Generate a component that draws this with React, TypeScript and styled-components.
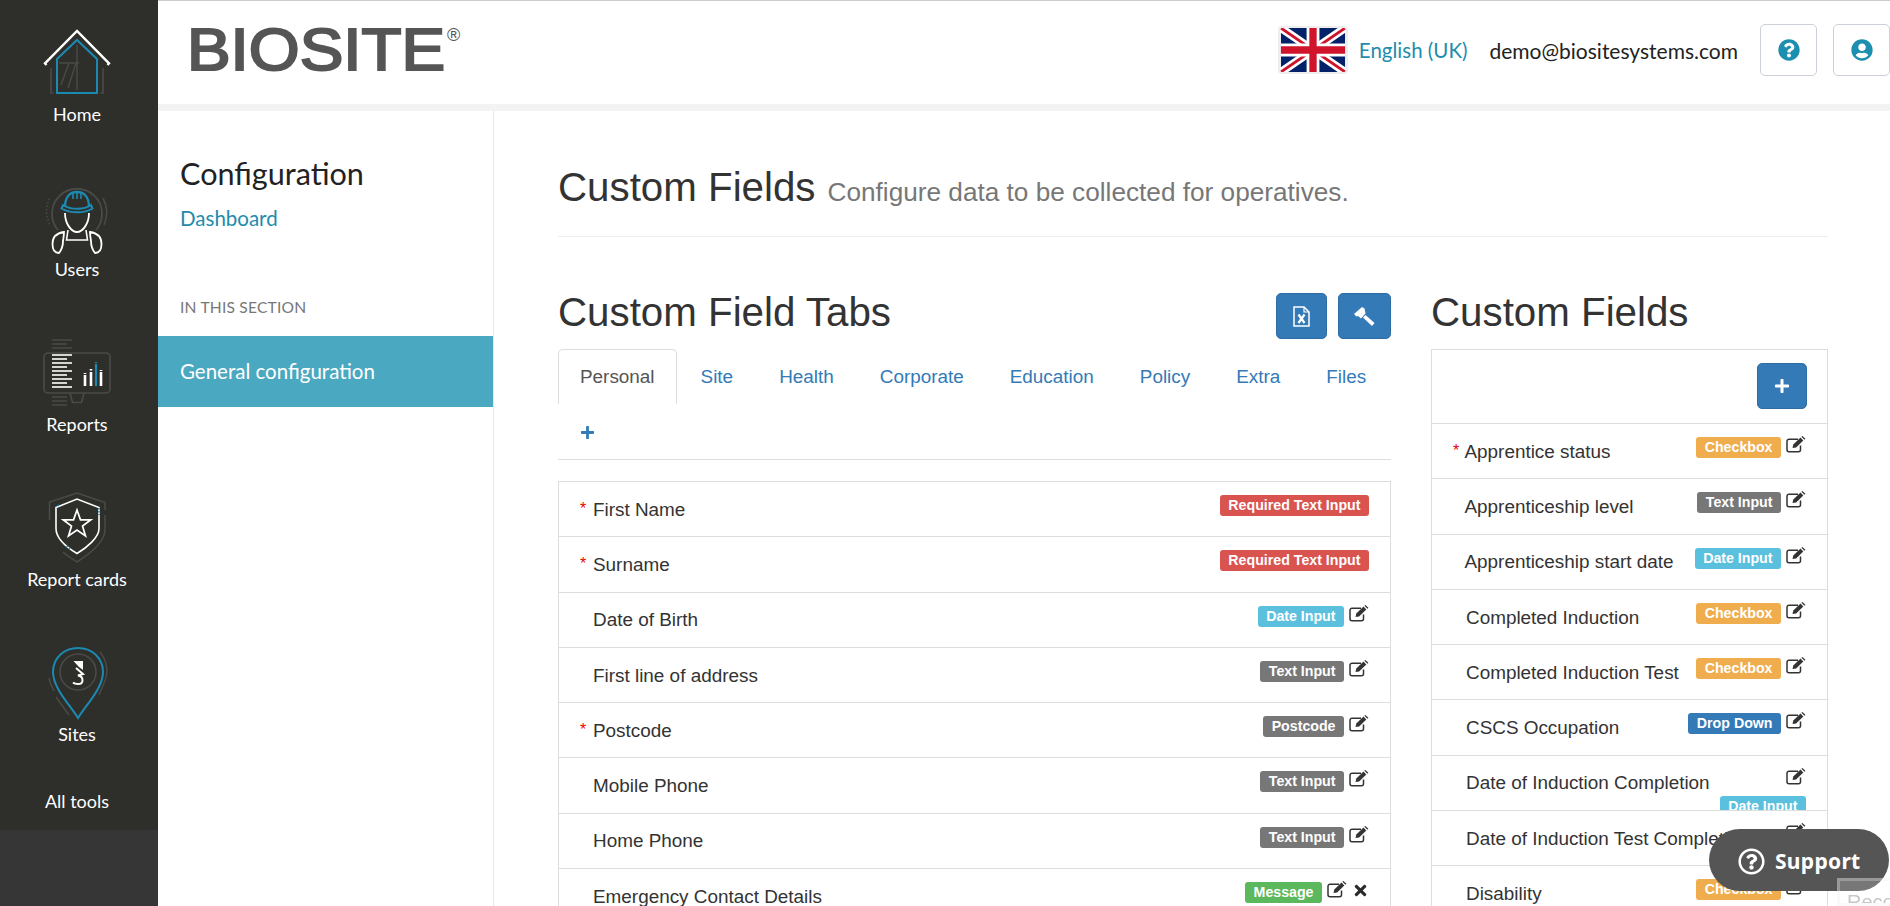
import React from 'react'
import styled, { createGlobalStyle } from 'styled-components'
import { FaQuestionCircle, FaUserCircle, FaPlus, FaTimes, FaRegQuestionCircle } from 'react-icons/fa'

const sans = `"Liberation Sans", Arial, sans-serif`
const ui = `Lato, "Noto Sans", sans-serif`

const Global = createGlobalStyle`
  html, body { margin: 0; padding: 0; height: 906px; overflow: hidden; background: #fff; }
  * { box-sizing: border-box; }
`

const Page = styled.div`
  display: flex;
  width: 1890px;
  height: 906px;
  overflow: hidden;
  font-family: ${sans};
  color: #333;
`

const Sidebar = styled.nav`
  width: 158px;
  flex: none;
  display: flex;
  flex-direction: column;
  background: #363636;
  font-family: ${ui};
`
const SideTop = styled.div`
  height: 830px;
  padding-right: 4px;
  background: #2e2e2b;
  display: flex;
  flex-direction: column;
`
const NavItem = styled.a`
  height: 155px;
  flex: none;
  padding-top: 18px;
  display: flex;
  flex-direction: column;
  align-items: center;
  color: #fff;
  font-size: 18px;
  line-height: 24px;
  svg { display: block; }
`
const AllTools = styled.a`
  margin-top: 14px;
  text-align: center;
  color: #fff;
  font-size: 18px;
  line-height: 24px;
`

const Body = styled.div`
  flex: 1;
  min-width: 0;
  display: flex;
  flex-direction: column;
`
const TopBar = styled.header`
  height: 111px;
  flex: none;
  border-top: 1px solid #ccc;
  border-bottom: 7px solid #f3f3f3;
  display: flex;
  align-items: flex-start;
  justify-content: space-between;
  font-family: ${ui};
`
const Logo = styled.svg`
  margin: 9px 0 0 28px;
  display: block;
`
const TopRight = styled.div`
  display: flex;
  align-items: center;
  height: 52px;
  margin-top: 23px;
`
const Flag = styled.svg`
  display: block;
  border-radius: 4px;
  border: 2px solid #eee;
  margin-right: 11px;
`
const Lang = styled.a`
  color: #1e8cab;
  font-size: 20.5px;
  margin-right: 22px;
`
const Email = styled.span`
  color: #222;
  font-size: 21px;
  margin-right: 22px;
`
const IconBox = styled.button`
  width: 57px;
  height: 52px;
  margin-left: ${p => p.$gap || 0}px;
  border: 1px solid #ccd0d8;
  border-radius: 5px;
  background: #fff;
  color: #1c8fb0;
  display: flex;
  align-items: center;
  justify-content: center;
  padding: 0;
`

const Content = styled.div`
  flex: 1;
  min-height: 0;
  display: flex;
`
const SubNav = styled.aside`
  width: 336px;
  flex: none;
  border-right: 1px solid #e8e8e8;
  font-family: ${ui};
`
const SubTitle = styled.div`
  padding: 44px 0 0 22px;
  font-size: 30.6px;
  line-height: 38px;
  color: #222;
`
const SubLink = styled.a`
  display: block;
  padding: 12px 0 0 22px;
  font-size: 20.5px;
  line-height: 26px;
  color: #1e8cab;
`
const SectionLabel = styled.div`
  padding: 66px 0 0 22px;
  font-size: 15.6px;
  line-height: 20px;
  letter-spacing: 0.2px;
  color: #777;
`
const ActiveNav = styled.a`
  display: block;
  margin-top: 19px;
  height: 71px;
  line-height: 71px;
  padding-left: 22px;
  background: #4ba8c1;
  color: #fff;
  font-size: 20.5px;
`

const Main = styled.main`
  flex: 1;
  min-width: 0;
  padding: 54px 62px 0 64px;
`
const PageHead = styled.div`
  display: flex;
  align-items: baseline;
  gap: 12px;
  height: 72px;
  border-bottom: 1px solid #eee;
`
const H1 = styled.h1`
  margin: 0;
  font-size: 40.3px;
  line-height: 46px;
  font-weight: 400;
  color: #333;
`
const Small = styled.small`
  font-size: 26.2px;
  color: #777;
`
const Columns = styled.div`
  display: grid;
  grid-template-columns: 833px 397px;
  column-gap: 40px;
  margin-top: 53px;
`
const ColHead = styled.div`
  display: flex;
  justify-content: space-between;
  align-items: flex-start;
  height: 59px;
`
const H2 = styled.h2`
  margin: 0;
  font-size: 40.3px;
  line-height: 46px;
  font-weight: 400;
  color: #333;
`
const BtnGroup = styled.div`
  display: flex;
  gap: 11px;
  margin-top: 3px;
`
const BlueBtn = styled.button`
  width: ${p => p.$w || 51}px;
  height: 46px;
  background: #337ab7;
  border: 1px solid #2e6da4;
  border-radius: 5px;
  color: #fff;
  padding: 0;
  display: flex;
  align-items: center;
  justify-content: center;
`

const Tabs = styled.div`
  display: flex;
  flex-wrap: wrap;
  border-bottom: 1px solid #ddd;
  margin-bottom: 21px;
`
const Tab = styled.a`
  height: 55px;
  padding: 0 21px;
  margin-right: 2px;
  display: flex;
  align-items: center;
  font-size: 18.9px;
  border: 1px solid ${p => (p.$active ? '#ddd' : 'transparent')};
  border-bottom: 0;
  border-radius: 5px 5px 0 0;
  color: ${p => (p.$active ? '#555' : '#337ab7')};
`

const List = styled.div`
  display: flex;
  flex-direction: column;
`
const AddRow = styled.div`
  height: 75px;
  border: 1px solid #ddd;
  padding: 13px 20px 0 0;
  display: flex;
  justify-content: flex-end;
`
const Row = styled.div`
  height: 56.3px;
  flex: none;
  margin-top: -1px;
  padding: 0 21px;
  border: 1px solid #ddd;
  background: #fff;
  display: flex;
  align-items: center;
  overflow: hidden;
  position: relative;
  &:first-child { margin-top: 0; }
`
const Star = styled.span`
  width: 13px;
  flex: none;
  color: #e00;
  font-size: 16px;
  line-height: 1;
`
const FieldName = styled.span`
  flex: 1;
  min-width: 0;
  margin-left: ${p => p.$shift || 0}px;
  padding-top: 1px;
  font-size: 18.9px;
  white-space: nowrap;
`
const Tools = styled.div`
  align-self: flex-start;
  flex: none;
  display: flex;
  flex-direction: ${p => (p.$stacked ? 'column-reverse' : 'row')};
  align-items: ${p => (p.$stacked ? 'flex-end' : 'flex-start')};
  gap: ${p => (p.$stacked ? 11 : 5)}px;
  padding-top: 13px;
`
const toneColors = {
  danger: '#d9534f',
  info: '#5bc0de',
  muted: '#777',
  warning: '#f0ad4e',
  primary: '#337ab7',
  success: '#5cb85c',
}
const Badge = styled.span`
  height: 21px;
  padding: 0 8.5px;
  border-radius: 3px;
  background: ${p => toneColors[p.$tone]};
  color: #fff;
  font-size: 14.2px;
  line-height: 20px;
  font-weight: 700;
  white-space: nowrap;
`
const EditSvg = styled.svg`
  display: block;
  flex: none;
  margin-top: -1px;
`
const Close = styled.span`
  color: #2a2a2a;
  display: flex;
`

const SupportPill = styled.button`
  position: fixed;
  right: 1px;
  bottom: 15px;
  width: 180px;
  height: 62px;
  border: 0;
  border-radius: 31px;
  background: #555;
  color: #fff;
  font-family: "Noto Sans", sans-serif;
  font-size: 21px;
  font-weight: 700;
  letter-spacing: 0.3px;
  display: flex;
  align-items: center;
  gap: 10px;
  padding: 2px 0 0 29px;
`
const RecordBox = styled.div`
  position: fixed;
  right: 0;
  bottom: 0;
  width: 53px;
  height: 28px;
  border: 3px solid rgba(235, 235, 235, 0.3);
  border-right: 0;
  background: rgba(255, 255, 255, 0.2);
  color: #c8c8c8;
  font-family: ${sans};
  font-size: 20px;
  line-height: 26px;
  padding: 8px 0 0 7px;
  overflow: hidden;
`

const Edit = () => (
  <EditSvg width="20" height="17" viewBox="0 0 20 17" fill="none">
    <path d="M14.500 9.500v4.200a2 2 0 0 1-2 2H3a2 2 0 0 1-2-2V5.200a2 2 0 0 1 2-2h9" stroke="#333" strokeWidth="1.500" />
    <path d="M6.500 12l.8-3.400 7.200-7 2.800 2.800-7.200 7z" fill="#333" />
    <path d="M15.400.8l1-.8 3 2.800-.9 1z" fill="#333" />
  </EditSvg>
)

const gray = '#4a4a47'
const blue = '#1c8ab0'

const HomeIcon = () => (
  <svg width="90" height="84" viewBox="32 18 90 84" fill="none">
    <path d="M51 68v25h2.500M103 68v25h-2.500" stroke={gray} strokeWidth="1.600" />
    <path d="M77 45v45M59 63h20M61 85l8-22M68 88l8-25" stroke={gray} strokeWidth="1.400" />
    <path d="M57 93V59l20-19 20 19v34z" stroke={blue} strokeWidth="2" />
    <path d="M46.500 65L45 63.300 77 31l32 32.300-1.500 1.700" stroke="#fff" strokeWidth="2.400" />
  </svg>
)

const UsersIcon = () => (
  <svg width="90" height="84" viewBox="32 173 90 84" fill="none">
    <path d="M58 230A25 25 0 1 1 96 230" stroke={gray} strokeWidth="1.800" />
    <path d="M49.500 224A31 31 0 0 1 50 197" stroke={gray} strokeWidth="1.400" strokeDasharray="1.500 2" />
    <path d="M103 198A31 31 0 0 1 104 225" stroke={gray} strokeWidth="1.600" />
    <path d="M65 207c0-10 5-15 12-15s12 5 12 15" stroke={blue} strokeWidth="2.400" />
    <path d="M73 192v7M77 191v8M81 192v7" stroke={blue} strokeWidth="1.600" />
    <path d="M63 205c8 5 21 5 28 0l1.500 3.500c-8 5-22 5-31 0z" stroke={blue} strokeWidth="2" />
    <path d="M65 213c0 11 6.500 19 12 19s12-8 12-19" stroke="#fff" strokeWidth="1.800" />
    <path d="M68 230l-1.500 10h21L86 230" stroke="#fff" strokeWidth="1.600" />
    <path d="M64 232c-7 1-11.500 5-11.500 12 0 5 2 9 6.500 9 2.500-3 4-8 4-12 .500-3 1-6 1-9zM90 232c7 1 11.500 5 11.500 12 0 5-2 9-6.500 9-2.500-3-4-8-4-12-.500-3-1-6-1-9z" stroke="#fff" strokeWidth="1.800" />
  </svg>
)

const whiteLines = [355, 359, 363, 367, 371, 375, 379, 383, 387]

const ReportsIcon = () => (
  <svg width="90" height="84" viewBox="32 328 90 84" fill="none">
    <path d="M52 340h20M52 344h15M52 348h20M52 397h15M52 401h15M52 405h15" stroke={gray} strokeWidth="1.500" />
    <rect x="44" y="353" width="66" height="40" rx="4" stroke={gray} strokeWidth="1.600" />
    <path d="M70 393l2.500 9.500h9L84 393" stroke={gray} strokeWidth="1.600" />
    {whiteLines.map((y, i) => (
      <path key={y} d={`M52 ${y}h${i % 2 ? 15 : 20}`} stroke="#fff" strokeWidth="1.600" />
    ))}
    <path d="M85 375v11M91 372v14M101 372v14" stroke="#fff" strokeWidth="2.600" />
    <path d="M85 373v1M91 369v1.500M101 370v1" stroke="#fff" strokeWidth="2.600" />
    <path d="M96 364v22" stroke={blue} strokeWidth="2.200" />
    <path d="M96 362v1" stroke={blue} strokeWidth="2.200" />
  </svg>
)

const CardsIcon = () => (
  <svg width="90" height="84" viewBox="32 483 90 84" fill="none">
    <path d="M49.500 520v-18L77 493l28 9.500V510M105 515v15c0 12-14 23-28 32-6-4-11-7-14-10" stroke={gray} strokeWidth="1.500" />
    <path d="M56 507.500L77 499l22 8.500v21c0 9-12 19-22 25-10-6-21-15-21-25z" stroke="#fff" strokeWidth="1.600" />
    <path d="M59 505l-3 1.500M99 508v7M70 549l-4-3" stroke={blue} strokeWidth="1.600" strokeDasharray="1.500 1.500" />
    <path d="M77 510l3.500 9.800h10.300l-8.300 6.200 3 10-8.500-6-8.500 6 3-10-8.300-6.200h10.300z" stroke="#fff" strokeWidth="1.700" />
  </svg>
)

const SitesIcon = () => (
  <svg width="90" height="84" viewBox="32 638 90 84" fill="none">
    <circle cx="78" cy="672" r="18" stroke={gray} strokeWidth="1.600" />
    <path d="M100 652c7 9 9 20 4 31l-5 12M49 678c1 5 3 9 5 13M56 697l13 18" stroke={gray} strokeWidth="1.500" />
    <path d="M78 718c-8-13-25-30-25-46 0-14 11-24 25-24s25 10 25 24c0 16-17 33-25 46z" stroke={blue} strokeWidth="2" />
    <path d="M73.500 661H83v9l-4-3z" fill="#fff" />
    <path d="M76 668l7 6-5 1.500c6 1 6 8.500 0 8.500-2 0-4-.5-5-1.500" stroke="#fff" strokeWidth="2" />
  </svg>
)

const XlsIcon = () => (
  <svg width="17" height="21" viewBox="0 0 17 21" fill="none">
    <path d="M1 1h10l5 5v14H1z" stroke="#fff" strokeWidth="1.500" />
    <path d="M11 1v5h5" stroke="#fff" strokeWidth="1.200" />
    <path d="M5.500 8.500l6 8.500M11.500 8.500l-6 8.500" stroke="#fff" strokeWidth="2.200" />
  </svg>
)

const HammerIcon = () => (
  <svg width="21" height="20" viewBox="0 0 21 20" fill="#fff">
    <path d="M0 8l8-7 2.500 1.500 1 5-4.500 5-3-2.500-1.500.500z" />
    <path d="M9 11.500l2.500-2.500 9 8-2.500 3z" />
  </svg>
)

const UkFlag = () => (
  <Flag width="70" height="48" viewBox="0 0 70 48">
    <rect width="70" height="48" fill="#012169" />
    <path d="M0 0l70 48M70 0L0 48" stroke="#fff" strokeWidth="9" />
    <path d="M0 0l70 48M70 0L0 48" stroke="#cf142b" strokeWidth="3" />
    <path d="M35 0v48M0 24h70" stroke="#fff" strokeWidth="14" />
    <path d="M35 0v48M0 24h70" stroke="#cf142b" strokeWidth="8" />
  </Flag>
)

const tabs = ['Personal', 'Site', 'Health', 'Corporate', 'Education', 'Policy', 'Extra', 'Files']

const personal = [
  { name: 'First Name', star: true, tone: 'danger', label: 'Required Text Input', locked: true },
  { name: 'Surname', star: true, tone: 'danger', label: 'Required Text Input', locked: true },
  { name: 'Date of Birth', tone: 'info', label: 'Date Input' },
  { name: 'First line of address', tone: 'muted', label: 'Text Input' },
  { name: 'Postcode', star: true, tone: 'muted', label: 'Postcode' },
  { name: 'Mobile Phone', tone: 'muted', label: 'Text Input' },
  { name: 'Home Phone', tone: 'muted', label: 'Text Input' },
  { name: 'Emergency Contact Details', tone: 'success', label: 'Message', removable: true },
]

const fields = [
  { name: 'Apprentice status', star: true, tone: 'warning', label: 'Checkbox', shift: -1.5 },
  { name: 'Apprenticeship level', tone: 'muted', label: 'Text Input', shift: -1.5 },
  { name: 'Apprenticeship start date', tone: 'info', label: 'Date Input', shift: -1.5 },
  { name: 'Completed Induction', tone: 'warning', label: 'Checkbox' },
  { name: 'Completed Induction Test', tone: 'warning', label: 'Checkbox' },
  { name: 'CSCS Occupation', tone: 'primary', label: 'Drop Down' },
  { name: 'Date of Induction Completion', tone: 'info', label: 'Date Input', stacked: true },
  { name: 'Date of Induction Test Completion', tone: 'info', label: 'Date Input', stacked: true },
  { name: 'Disability', tone: 'warning', label: 'Checkbox' },
]

const FieldRow = ({ item }) => (
  <Row>
    <Star>{item.star ? '*' : ''}</Star>
    <FieldName $shift={item.shift}>{item.name}</FieldName>
    <Tools $stacked={item.stacked}>
      <Badge $tone={item.tone}>{item.label}</Badge>
      {!item.locked && <Edit />}
      {item.removable && <Close><FaTimes size={17} /></Close>}
    </Tools>
  </Row>
)

const App = () => (
  <Page>
    <Global />
    <Sidebar>
      <SideTop>
        <NavItem><HomeIcon />Home</NavItem>
        <NavItem><UsersIcon />Users</NavItem>
        <NavItem><ReportsIcon />Reports</NavItem>
        <NavItem><CardsIcon />Report cards</NavItem>
        <NavItem><SitesIcon />Sites</NavItem>
        <AllTools>All tools</AllTools>
      </SideTop>
    </Sidebar>
    <Body>
      <TopBar>
        <Logo width="290" height="72" viewBox="0 0 290 72">
          <text x="1" y="60" fontFamily="Liberation Sans" fontSize="60" fill="#555" stroke="#555" strokeWidth="2.200" textLength="258" lengthAdjust="spacingAndGlyphs">BIOSITE</text>
          <text x="261" y="31" fontFamily="Liberation Sans" fontSize="18" fill="#555">®</text>
        </Logo>
        <TopRight>
          <UkFlag />
          <Lang>English (UK)</Lang>
          <Email>demo@biositesystems.com</Email>
          <IconBox><FaQuestionCircle size={22} /></IconBox>
          <IconBox $gap={16}><FaUserCircle size={22} /></IconBox>
        </TopRight>
      </TopBar>
      <Content>
        <SubNav>
          <SubTitle>Configuration</SubTitle>
          <SubLink>Dashboard</SubLink>
          <SectionLabel>IN THIS SECTION</SectionLabel>
          <ActiveNav>General configuration</ActiveNav>
        </SubNav>
        <Main>
          <PageHead>
            <H1>Custom Fields</H1>
            <Small>Configure data to be collected for operatives.</Small>
          </PageHead>
          <Columns>
            <div>
              <ColHead>
                <H2>Custom Field Tabs</H2>
                <BtnGroup>
                  <BlueBtn><XlsIcon /></BlueBtn>
                  <BlueBtn $w={53}><HammerIcon /></BlueBtn>
                </BtnGroup>
              </ColHead>
              <Tabs>
                {tabs.map((t, i) => <Tab key={t} $active={i === 0}>{t}</Tab>)}
                <Tab><FaPlus size={15} /></Tab>
              </Tabs>
              <List>
                {personal.map(f => <FieldRow key={f.name} item={f} />)}
              </List>
            </div>
            <div>
              <ColHead>
                <H2>Custom Fields</H2>
              </ColHead>
              <List>
                <AddRow><BlueBtn $w={50}><FaPlus size={16} /></BlueBtn></AddRow>
                {fields.map(f => <FieldRow key={f.name} item={f} />)}
              </List>
            </div>
          </Columns>
        </Main>
      </Content>
    </Body>
    <SupportPill><FaRegQuestionCircle size={27} />Support</SupportPill>
    <RecordBox>Record</RecordBox>
  </Page>
)

export default App
